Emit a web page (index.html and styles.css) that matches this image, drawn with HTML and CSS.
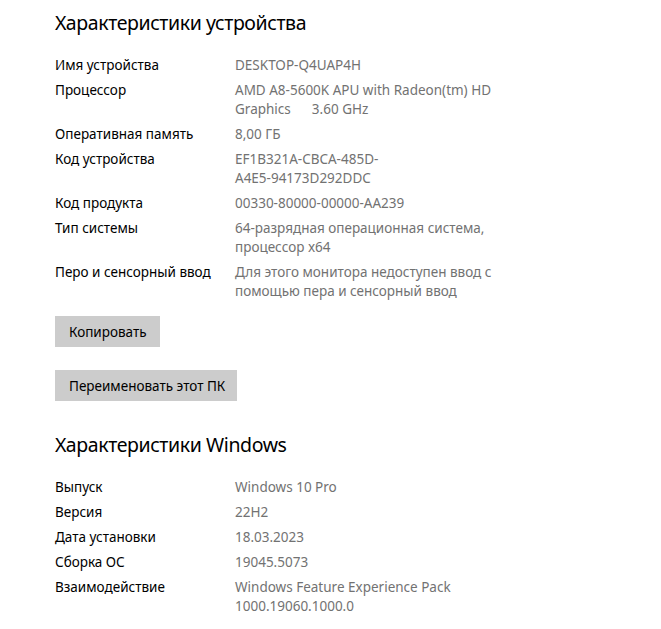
FILE: index.html
```html
<!DOCTYPE html>
<html lang="ru">
<head>
<meta charset="utf-8">
<link rel="stylesheet" href="styles.css">
</head>
<body>
<main class="page">
  <h2 class="title">Характеристики устройства</h2>
  <div class="specs">
    <div class="label">Имя устройства</div><div class="value">DESKTOP-Q4UAP4H</div>
    <div class="label">Процессор</div><div class="value">AMD A8-5600K APU with Radeon(tm) HD<br><span class="pre">Graphics      3.60 GHz</span></div>
    <div class="label">Оперативная память</div><div class="value">8,00 ГБ</div>
    <div class="label">Код устройства</div><div class="value">EF1B321A-CBCA-485D-<br>A4E5-94173D292DDC</div>
    <div class="label">Код продукта</div><div class="value">00330-80000-00000-AA239</div>
    <div class="label">Тип системы</div><div class="value">64-разрядная операционная система,<br>процессор x64</div>
    <div class="label">Перо и сенсорный ввод</div><div class="value">Для этого монитора недоступен ввод с<br>помощью пера и сенсорный ввод</div>
  </div>
  <div class="buttons">
    <button class="btn btn-copy">Копировать</button>
    <button class="btn btn-rename">Переименовать этот ПК</button>
  </div>
  <h2 class="title title-win">Характеристики Windows</h2>
  <div class="specs">
    <div class="label">Выпуск</div><div class="value">Windows 10 Pro</div>
    <div class="label">Версия</div><div class="value">22H2</div>
    <div class="label">Дата установки</div><div class="value">18.03.2023</div>
    <div class="label">Сборка ОС</div><div class="value">19045.5073</div>
    <div class="label">Взаимодействие</div><div class="value">Windows Feature Experience Pack<br>1000.19060.1000.0</div>
  </div>
</main>
</body>
</html>
```

FILE: styles.css
```css
html, body {
  margin: 0;
  padding: 0;
  background: #ffffff;
}
body {
  font-family: "Noto Sans", "Open Sans", sans-serif;
  color: #000000;
}
.page {
  padding: 9px 0 0 55px;
}
.title {
  margin: 0;
  font-size: 19.5px;
  font-weight: 400;
  line-height: 28px;
  color: #000;
  letter-spacing: -0.4px;
}
.specs {
  display: grid;
  grid-template-columns: 180px 300px;
  row-gap: 6px;
  margin-top: 18.5px;
  font-size: 13.5px;
  line-height: 19px;
}
.label {
  color: #000;
}
.value {
  color: #727272;
}
.pre {
  white-space: pre;
}
.buttons {
  display: flex;
  flex-direction: column;
  align-items: flex-start;
  gap: 23px;
  margin-top: 15.5px;
}
.btn {
  height: 31px;
  border: none;
  background: #cccccc;
  color: #000;
  font-family: "Noto Sans", "Open Sans", sans-serif;
  font-size: 13.5px;
  padding: 0 0 0 14px;
  margin: 0;
  text-align: left;
  white-space: nowrap;
}
.btn-copy { width: 105px; }
.btn-rename { width: 182px; }
.title-win {
  margin-top: 30px;
}
```
